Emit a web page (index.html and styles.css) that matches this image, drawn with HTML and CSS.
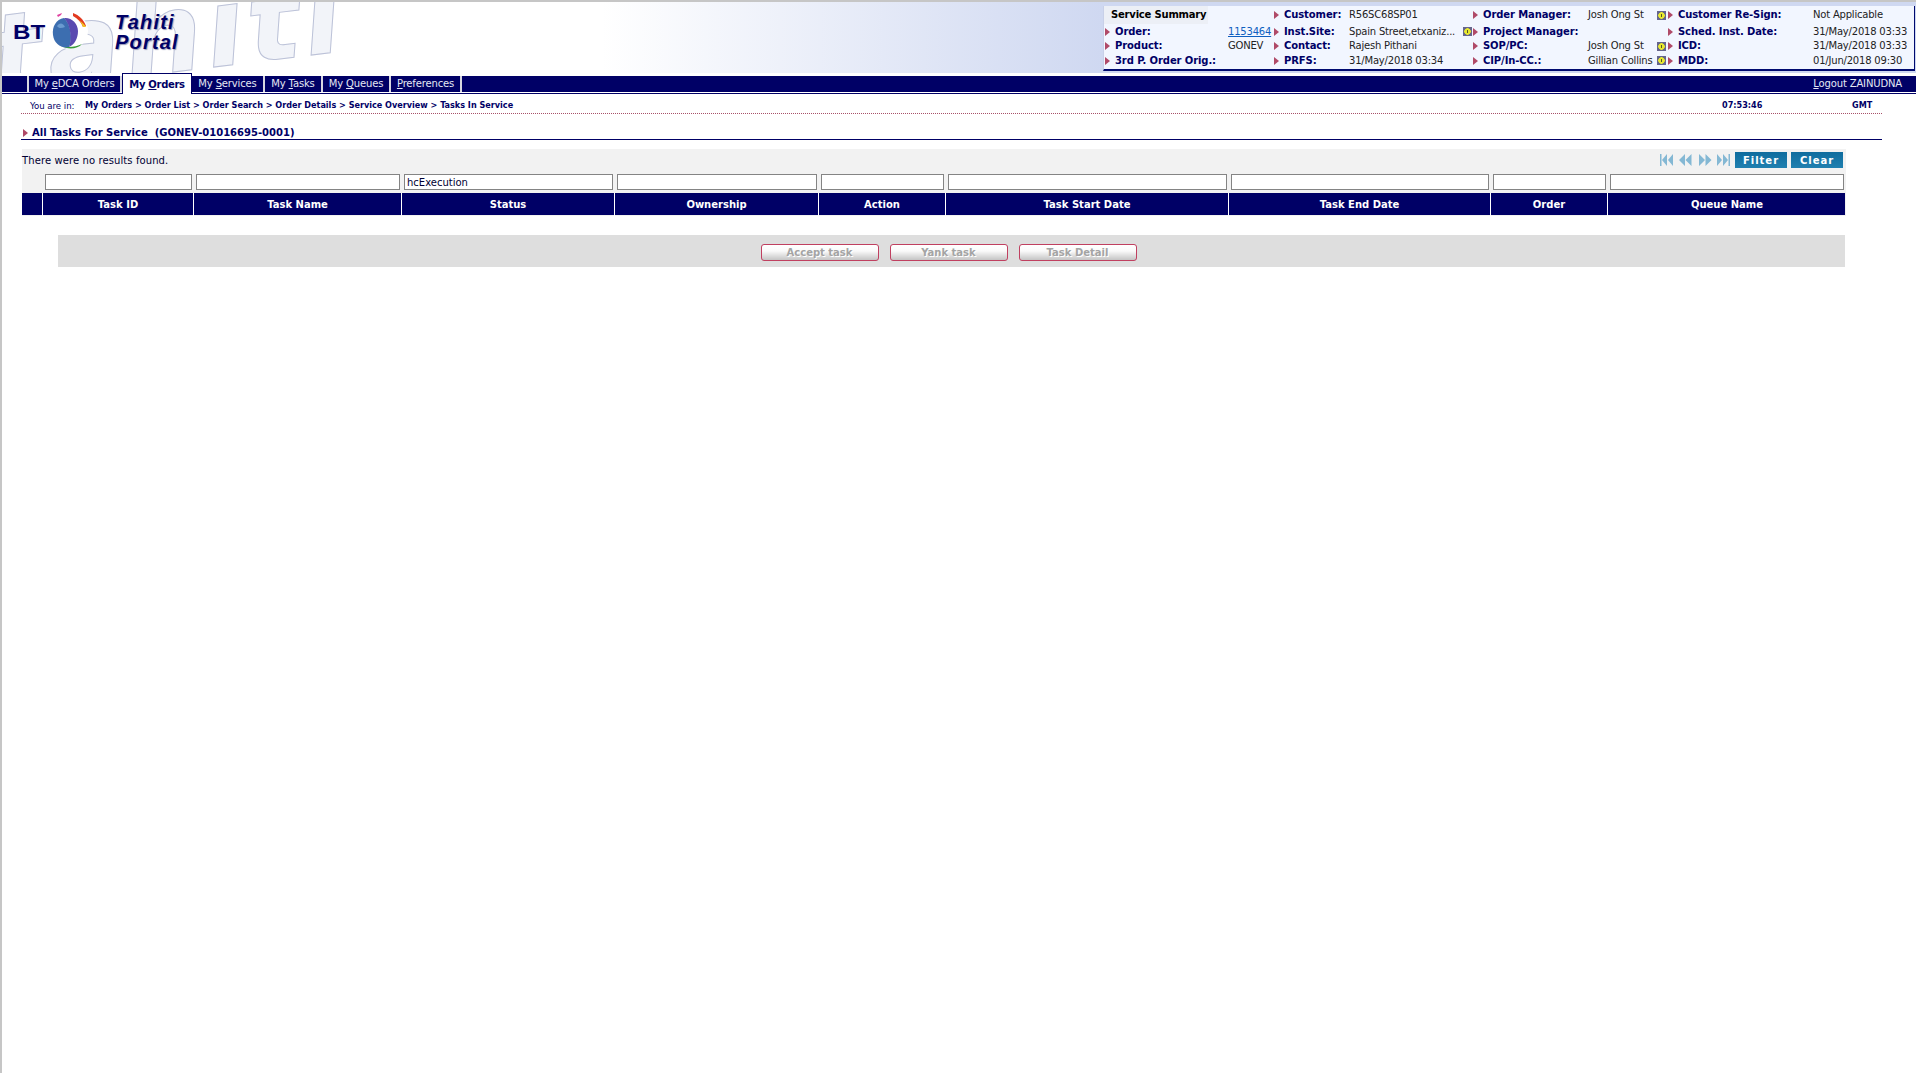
FILE: index.html
```html
<!DOCTYPE html>
<html lang="en">
<head>
    <meta charset="UTF-8">
    <title>Tahiti Portal</title>
    <link rel="stylesheet" href="styles.css">
</head>
<body>

<div class="banner">
    <div class="watermark">tahiti</div>
    <div class="logo">
        <span class="bt">BT</span>
        <svg class="globe" width="38" height="38" viewBox="0 0 38 38">
            <circle cx="19" cy="19" r="18" fill="#fff"/>
            <path d="M22 1 C28 3 33 8 35 14 L32 15 C30 10 27 7 22 4 Z" fill="#e23a20"/>
            <path d="M28 8 C31 10 34 13 35 15 L32 15 C31 12 30 10 28 8 Z" fill="#f2c420"/>
            <path d="M6 3 L11 1 L10 3 L7 5 Z" fill="#e040a0"/>
            <path d="M10 34 C17 38 27 37 31 32 C25 35 17 36 10 34 Z" fill="#3a9a3a"/>
            <path d="M13 6 C5 7 1 15 2 23 C3 32 11 37 18 35 C22 28 20 12 13 6 Z" fill="#3c6eb0"/>
            <path d="M13 6 C20 5 27 11 27 19 C27 27 23 33 18 35 C21 28 20 13 13 6 Z" fill="#5a4ab0"/>
            <path d="M6 14 C9 10 12 11 14 15 C11 16 8 17 6 14 Z" fill="#6a9ad0"/>
        </svg>
        <div class="portal-name">Tahiti<br>Portal</div>
    </div>

    <div class="summary">
        <div class="cell c1 summary-head"><b>Service Summary</b></div>
        <div class="cell c2"><i class="arrow"></i><span class="lbl">Customer:</span><span>R56SC68SP01</span></div>
        <div class="cell c3"><i class="arrow"></i><span class="lbl">Order Manager:</span><span>Josh Ong St</span><i class="note"></i></div>
        <div class="cell c4"><i class="arrow"></i><span class="lbl">Customer Re-Sign:</span><span>Not Applicable</span></div>

        <div class="cell c1"><i class="arrow"></i><span class="lbl">Order:</span><a href="#">1153464</a></div>
        <div class="cell c2"><i class="arrow"></i><span class="lbl">Inst.Site:</span><span>Spain Street,etxaniz...</span><i class="note"></i></div>
        <div class="cell c3"><i class="arrow"></i><span class="lbl">Project Manager:</span></div>
        <div class="cell c4"><i class="arrow"></i><span class="lbl">Sched. Inst. Date:</span><span>31/May/2018 03:33</span></div>

        <div class="cell c1"><i class="arrow"></i><span class="lbl">Product:</span><span>GONEV</span></div>
        <div class="cell c2"><i class="arrow"></i><span class="lbl">Contact:</span><span>Rajesh Pithani</span></div>
        <div class="cell c3"><i class="arrow"></i><span class="lbl">SOP/PC:</span><span>Josh Ong St</span><i class="note"></i></div>
        <div class="cell c4"><i class="arrow"></i><span class="lbl">ICD:</span><span>31/May/2018 03:33</span></div>

        <div class="cell c1"><i class="arrow"></i><span class="lbl">3rd P. Order Orig.:</span></div>
        <div class="cell c2"><i class="arrow"></i><span class="lbl">PRFS:</span><span>31/May/2018 03:34</span></div>
        <div class="cell c3"><i class="arrow"></i><span class="lbl">CIP/In-CC.:</span><span>Gillian Collins</span><i class="note"></i></div>
        <div class="cell c4"><i class="arrow"></i><span class="lbl">MDD:</span><span>01/Jun/2018 09:30</span></div>
    </div>
</div>

<div class="nav">
    <a class="first"></a>
    <a class="tab t-edca">My <u>e</u>DCA Orders</a>
    <a class="tab active">My <u>O</u>rders</a>
    <a class="tab t-services">My <u>S</u>ervices</a>
    <a class="tab t-tasks">My <u>T</u>asks</a>
    <a class="tab t-queues">My <u>Q</u>ueues</a>
    <a class="tab t-prefs"><u>P</u>references</a>
    <a class="logout"><u>L</u>ogout ZAINUDNA</a>
</div>

<div class="content">
    <div class="crumbs">
        <span class="you">You are in:</span>
        <b class="path">My Orders &gt; Order List &gt; Order Search &gt; Order Details &gt; Service Overview &gt; Tasks In Service</b>
        <b class="clock">07:53:46</b>
        <b class="zone">GMT</b>
    </div>

    <h1 class="titulo"><i class="arrow"></i>All Tasks For Service&nbsp; (GONEV-01016695-0001)</h1>

    <div class="filtro">
        <div class="filtro-top">
            <span class="msg">There were no results found.</span>
            <svg class="pager" width="70" height="12" viewBox="0 0 70 12" fill="#84b8d4">
                <path d="M0 0h1.5v12H0zM2 6l5-6v12zM8 6l5-6v12z"/>
                <path d="M19 6l6-6v12zM25.500 6l6-6v12z"/>
                <path d="M39 0l6 6-6 6zM45.500 0l6 6-6 6z"/>
                <path d="M57 0l5 6-5 6zM63 0l5 6-5 6zM68.500 0H70v12h-1.500z"/>
            </svg>
            <button class="btn-azul">Filter</button>
            <button class="btn-azul">Clear</button>
        </div>
        <div class="grade inputs">
            <div></div>
            <div><input type="text"></div>
            <div><input type="text"></div>
            <div><input type="text" value="hcExecution"></div>
            <div><input type="text"></div>
            <div><input type="text"></div>
            <div><input type="text"></div>
            <div><input type="text"></div>
            <div><input type="text"></div>
            <div><input type="text"></div>
        </div>
        <div class="grade cabecalho">
            <div></div>
            <div>Task ID</div>
            <div>Task Name</div>
            <div>Status</div>
            <div>Ownership</div>
            <div>Action</div>
            <div>Task Start Date</div>
            <div>Task End Date</div>
            <div>Order</div>
            <div>Queue Name</div>
        </div>
    </div>

    <div class="acoes">
        <button class="btn-off" disabled>Accept task</button>
        <button class="btn-off" disabled>Yank task</button>
        <button class="btn-off" disabled>Task Detail</button>
    </div>
</div>

</body>
</html>
```

FILE: styles.css
```css
/* Base */
html, body {
    height: 100%;
}

body {
    margin: 0;
    border-top: 2px solid #c6c6c6;
    border-left: 2px solid #c6c6c6;
    box-sizing: border-box;
    font-family: "DejaVu Sans", Verdana, sans-serif;
    font-size: 10px;
    color: #000066;
    background: #fff;
    overflow: hidden;
}

/* Banner */
.banner {
    position: relative;
    height: 71px;
    overflow: hidden;
    display: flex;
    justify-content: space-between;
    background: linear-gradient(to right, #fff 600px, #cfd8f1 1100px);
}

.watermark {
    position: absolute;
    left: -7px;
    top: -21px;
    font-size: 110px;
    font-weight: bold;
    font-style: italic;
    letter-spacing: 4px;
    line-height: 150px;
    color: #f2f4f9;
    -webkit-text-stroke: 1px #bcc2d8;
    transform: rotate(-7deg);
    transform-origin: 0 115px;
}

.logo {
    position: relative;
    display: flex;
    align-items: flex-start;
    padding-left: 11px;
}

.bt {
    margin-top: 20px;
    font-family: "Liberation Sans", Arial, sans-serif;
    font-size: 21px;
    font-weight: bold;
    line-height: 20px;
    transform: scaleX(1.15);
    transform-origin: left center;
    width: 38px;
}

.globe {
    margin-top: 10px;
}

.portal-name {
    margin: 10px 0 0 26px;
    font-family: "Liberation Sans", Arial, sans-serif;
    font-size: 20px;
    font-weight: bold;
    font-style: italic;
    letter-spacing: 1.200px;
    line-height: 20px;
    text-shadow: 1px 1px 1px #9a9ab8;
}

/* Service summary */
.summary {
    position: relative;
    width: 812px;
    height: 65px;
    margin-top: 4px;
    margin-right: 1px;
    box-sizing: border-box;
    display: grid;
    grid-template-columns: 169px 200px 194px 1fr;
    grid-template-rows: 18px 15px 14px 15px;
    background: #f2f6ff;
    border-bottom: 2px solid #000a70;
    border-right: 1px solid #000a70;
    border-left: 1px solid #c8d0e8;
    color: #222;
    line-height: 14px;
}

.cell {
    display: flex;
    align-items: center;
    white-space: nowrap;
    letter-spacing: -0.2px;
}

.c1 { padding-left: 1px; }
.c2, .c4 { padding-left: 1px; }
.c3 { padding-left: 0; }

.summary-head {
    background: #eceff6;
    margin-right: 65px;
    padding-left: 7px;
    color: #000;
}

.lbl {
    flex: none;
    font-weight: bold;
    color: #000066;
    letter-spacing: -0.1px;
}

.c1 .lbl { width: 113px; }
.c2 .lbl { width: 65px; }
.c3 .lbl { width: 105px; }
.c4 .lbl { width: 135px; }

.cell a {
    color: #0f5fc0;
    text-decoration: underline;
}

.arrow {
    flex: none;
    display: inline-block;
    width: 0;
    height: 0;
    border-style: solid;
    border-width: 4px 0 4px 5px;
    border-color: transparent transparent transparent #b04a68;
    margin-right: 5px;
}

.note {
    flex: none;
    position: relative;
    width: 9px;
    height: 9px;
    margin-left: auto;
    margin-right: 1px;
    background: radial-gradient(circle, #e8e830 0 3px, #66668c 3.500px);
}

.note::after {
    content: "";
    position: absolute;
    left: 4px;
    top: 3px;
    width: 1px;
    height: 3px;
    background: #55552a;
}

/* Nav */
.nav {
    display: flex;
    height: 16px;
    margin-top: 3px;
    background: #000066;
    border-bottom: 1px solid #fff;
    box-shadow: 0 1px 0 #000066;
    color: #e4e8f4;
    line-height: 16px;
    letter-spacing: -0.15px;
}

.first {
    width: 25px;
}

.tab {
    flex: none;
    box-sizing: border-box;
    border-left: 2px solid #d8d8e0;
    text-align: center;
}

.t-edca { width: 95px; border-right: 2px solid #d8d8e0; }
.t-services { width: 71px; border-left: none; }
.t-tasks { width: 58px; }
.t-queues { width: 68px; }
.t-prefs { width: 73px; border-right: 2px solid #d8d8e0; }

.active {
    width: 70px;
    height: 21px;
    margin-top: -3px;
    background: #fff;
    border: 1px solid #000066;
    border-bottom: none;
    color: #000066;
    font-weight: bold;
    line-height: 22px;
    position: relative;
    letter-spacing: -0.3px;
}

.logout {
    margin-left: auto;
    margin-right: 14px;
}

/* Content */
.content {
    padding-left: 19px;
}

.crumbs {
    display: flex;
    width: 1861px;
    height: 20px;
    margin-top: 1px;
    padding-top: 4px;
    box-sizing: border-box;
    align-items: center;
    border-bottom: 1px dotted #a85068;
    line-height: 13px;
}

.you {
    width: 55px;
    margin-left: 9px;
    font-family: "DejaVu Sans Condensed", "DejaVu Sans", sans-serif;
    font-size: 9.500px;
}

.path, .clock, .zone {
    font-family: "DejaVu Sans Condensed", "DejaVu Sans", sans-serif;
    font-size: 9px;
}

.path {
    width: 1637px;
}

.clock {
    width: 130px;
}

.titulo {
    display: flex;
    align-items: center;
    width: 1861px;
    height: 26px;
    margin: 0;
    box-sizing: border-box;
    padding-top: 12px;
    border-bottom: 1px solid #000066;
    font-size: 10px;
    font-weight: bold;
}

.titulo .arrow {
    margin: 0 4px 0 2px;
}

.filtro {
    width: 1824px;
    margin: 9px 0 0 1px;
    background: #f2f2f2;
    padding-bottom: 1px;
    color: #000033;
}

.filtro-top {
    display: flex;
    align-items: center;
    height: 25px;
    padding: 0 3px 3px 0;
    box-sizing: border-box;
}

.msg {
    margin-right: auto;
    letter-spacing: 0.1px;
}

.pager {
    margin-right: 5px;
}

.btn-azul {
    width: 52px;
    height: 16px;
    margin-left: 4px;
    padding: 0;
    border: none;
    background: linear-gradient(to bottom, #0f6c9e, #2080b0);
    color: #fff;
    font-family: inherit;
    font-size: 10px;
    font-weight: bold;
    letter-spacing: 1px;
}

.pager + .btn-azul {
    margin-left: 0;
}

.grade {
    display: grid;
    grid-template-columns: 21px 151px 208px 213px 204px 127px 283px 262px 117px 238px;
}

.inputs {
    height: 19px;
}

.inputs div {
    padding: 0 2px;
    min-width: 0;
}

.inputs input {
    display: block;
    width: 100%;
    height: 16px;
    box-sizing: border-box;
    margin: 0;
    padding: 0 2px;
    border: 1px solid #848484;
    background: #fff;
    font-family: inherit;
    font-size: 10px;
    color: #000033;
}

.cabecalho {
    height: 22px;
    width: 1823px;
    background: #000066;
    color: #fff;
    font-weight: bold;
    text-align: center;
    line-height: 23px;
}

.cabecalho div {
    border-right: 1px solid #fff;
}

.cabecalho div:last-child {
    border-right: none;
}

.acoes {
    display: flex;
    justify-content: center;
    align-items: center;
    gap: 11px;
    width: 1787px;
    height: 32px;
    margin: 19px 0 0 37px;
    padding: 3px 6px 0 0;
    box-sizing: border-box;
    background: #dedede;
}

.btn-off {
    width: 118px;
    height: 17px;
    padding: 0;
    border: 1px solid #c04060;
    border-radius: 3px;
    background: linear-gradient(to bottom, #fff, #fafafa 40%, #c4c4c4);
    color: #a4a4a4;
    font-family: inherit;
    font-size: 10px;
    font-weight: bold;
    text-shadow: 1px 1px 0 #fff;
}
```
